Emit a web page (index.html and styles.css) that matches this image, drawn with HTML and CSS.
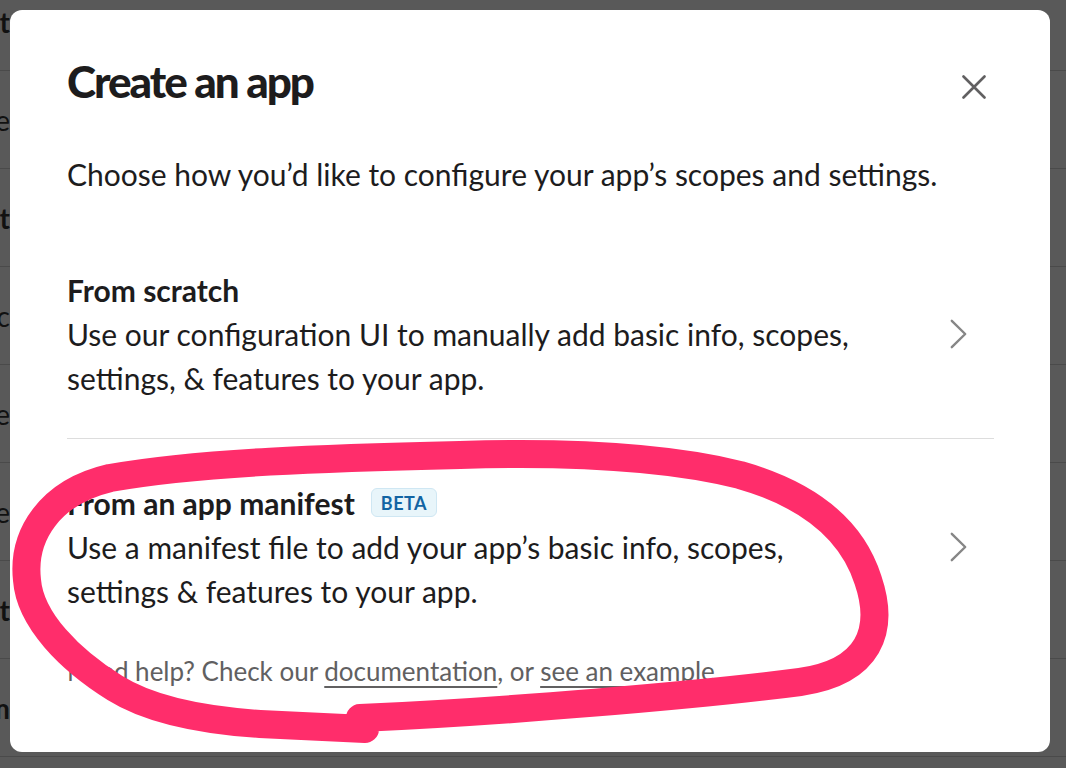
FILE: index.html
```html
<!DOCTYPE html>
<html lang="en">
<head>
<meta charset="utf-8">
<title>Create an app</title>
<link rel="stylesheet" href="styles.css">
</head>
<body>
<div class="page">
  <div class="row"><span class="cell bold">Test</span></div>
  <div class="row"><span class="cell">Name</span></div>
  <div class="row"><span class="cell bold">Test</span></div>
  <div class="row"><span class="cell">Acc</span></div>
  <div class="row"><span class="cell">Name</span></div>
  <div class="row"><span class="cell">Name</span></div>
  <div class="row"><span class="cell bold">Default</span></div>
  <div class="row"><span class="cell bold">Team</span></div>
</div>

<div class="modal" role="dialog">
  <div class="modal-header">
    <h1 class="title">Create an app</h1>
    <button class="close" aria-label="Close">
      <svg width="24" height="24" viewBox="0 0 24 24"><path d="M1.5 1.5 L22.5 22.5 M22.5 1.5 L1.5 22.5" stroke="#616061" stroke-width="2.6" stroke-linecap="round" fill="none"/></svg>
    </button>
  </div>
  <p class="intro">Choose how you’d like to configure your app’s scopes and settings.</p>

  <div class="option">
    <div class="option-text">
      <div class="option-title">From scratch</div>
      <div class="option-desc">Use our configuration UI to manually add basic info, scopes, settings, &amp; features to your app.</div>
    </div>
    <svg class="chevron" width="17" height="30" viewBox="0 0 17 30"><path d="M1.8 1.8 L15.2 15 L1.8 28.2" stroke="#868686" stroke-width="2.4" stroke-linecap="round" stroke-linejoin="round" fill="none"/></svg>
  </div>

  <div class="option last">
    <div class="option-text">
      <div class="option-title">From an app manifest <span class="badge">BETA</span></div>
      <div class="option-desc">Use a manifest file to add your app’s basic info, scopes, settings &amp; features to your app.</div>
    </div>
    <svg class="chevron" width="17" height="30" viewBox="0 0 17 30"><path d="M1.8 1.8 L15.2 15 L1.8 28.2" stroke="#868686" stroke-width="2.4" stroke-linecap="round" stroke-linejoin="round" fill="none"/></svg>
  </div>

  <p class="help">Need help? Check our <a href="#">documentation</a>, or <a href="#">see an example</a></p>
</div>

<svg class="annotation" width="1066" height="768" viewBox="0 0 1066 768">
  <path d="M360 718 C500 712 700 695 800 682 C870 672 885 630 868 580 C852 530 810 495 740 475 C660 455 560 452 460 455 C330 458 200 462 110 478 C50 492 22 535 27 580 C30 620 70 660 115 688 C150 710 200 720 260 724 L365 729" stroke="#ff2d6b" stroke-width="28" stroke-linecap="round" stroke-linejoin="round" fill="none"/>
</svg>
</body>
</html>
```

FILE: styles.css
```css
html, body {
  margin: 0;
  padding: 0;
  height: 100%;
  overflow: hidden;
}

body {
  background: #595959;
  font-family: Lato, "Noto Sans", sans-serif;
  position: relative;
}

.page {
  display: flex;
  flex-direction: column;
  margin-top: -27px;
}

.row {
  height: 97px;
  border-bottom: 1.5px solid #4a4a4a;
  display: flex;
  align-items: center;
}

.cell {
  width: 10px;
  overflow: hidden;
  display: flex;
  justify-content: flex-end;
  font-size: 28px;
  color: #111;
  white-space: nowrap;
}

.cell.bold {
  font-weight: 700;
}

.modal {
  position: absolute;
  left: 10px;
  top: 10px;
  width: 1040px;
  height: 742px;
  box-sizing: border-box;
  background: #fff;
  border-radius: 12px;
  padding: 45px 56px 0 57px;
  color: #1d1c1d;
}

.modal-header {
  display: flex;
  justify-content: space-between;
  align-items: flex-start;
}

.title {
  margin: 0;
  font-size: 44px;
  font-weight: 900;
  line-height: 52.8px;
  letter-spacing: -2px;
}

.close {
  width: 40px;
  height: 40px;
  margin-top: 12px;
  padding: 0;
  border: 0;
  background: transparent;
  display: flex;
  align-items: center;
  justify-content: center;
}

.intro {
  margin: 44px 0 0;
  font-size: 30px;
  line-height: 44px;
}

.option {
  display: flex;
  align-items: center;
  padding: 42px 0 38px;
  border-bottom: 1px solid #dddddd;
  margin-top: 30px;
}

.option + .option {
  margin-top: 0;
  padding-top: 42px;
}

.option.last {
  border-bottom: 0;
}

.option-text {
  flex: 1;
  max-width: 810px;
}

.option-title {
  font-size: 30px;
  font-weight: 700;
  line-height: 44px;
  display: flex;
  align-items: center;
}

.badge {
  margin-left: 16px;
  font-size: 18px;
  font-weight: 700;
  color: #1264a3;
  background: #e8f5fa;
  border: 1.5px solid #cfe7f3;
  border-radius: 6px;
  padding: 0 9px;
  height: 29px;
  box-sizing: border-box;
  display: inline-flex;
  align-items: center;
  letter-spacing: 0.5px;
}

.option-desc {
  font-size: 30px;
  line-height: 44px;
}

.chevron {
  margin-left: auto;
  margin-right: 27px;
}

.help {
  margin: 0;
  font-size: 26px;
  line-height: 40px;
  color: #616061;
}

.help a {
  color: #616061;
  text-decoration: underline;
  text-underline-offset: 5px;
  text-decoration-thickness: 1.5px;
}

.annotation {
  position: absolute;
  left: 0;
  top: 0;
  pointer-events: none;
}
```
